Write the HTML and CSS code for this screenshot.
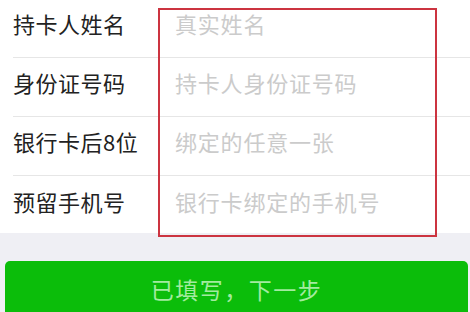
FILE: index.html
```html
<!DOCTYPE html>
<html>
<head>
<meta charset="utf-8">
<link rel="stylesheet" href="styles.css">
</head>
<body>
<div class="page">
  <div class="form">
    <div class="row"><span class="label">持卡人姓名</span><span class="ph">真实姓名</span></div>
    <div class="row"><span class="label">身份证号码</span><span class="ph">持卡人身份证号码</span></div>
    <div class="row"><span class="label">银行卡后8位</span><span class="ph">绑定的任意一张</span></div>
    <div class="row last"><span class="label">预留手机号</span><span class="ph">银行卡绑定的手机号</span></div>
    <div class="mark"></div>
  </div>
  <div class="btnwrap"><div class="btn">已填写，下一步</div></div>
</div>
</body>
</html>
```
FILE: styles.css
```css
html, body { margin: 0; padding: 0; }
body {
  width: 470px; height: 312px; overflow: hidden;
  background: #efeff4;
  font-family: "Noto Sans CJK SC", "Noto Sans", sans-serif;
}
.form {
  position: relative;
  background: #fff;
  padding-left: 13px;
  height: 234px;
  margin-top: -1px;
}
.row {
  display: flex;
  align-items: center;
  height: 58px;
  padding-bottom: 10px;
  box-sizing: border-box;
  height: 59px;
  border-bottom: 1px solid #e6e6e6;
}
.row.last { border-bottom: none; }
.label {
  width: 162px;
  font-size: 22px;
  color: #222;
  letter-spacing: 0.5px;
}
.ph {
  font-size: 22px;
  color: #cbcbcb;
  letter-spacing: 0.8px;
}
.mark {
  position: absolute;
  left: 158px; top: 9px;
  width: 275px; height: 225px;
  border: 2px solid #cc3440;
}
.btnwrap { padding: 28px 2px 0 5px; }
.btn {
  height: 60px;
  background: #0bbd0a;
  border-radius: 5px;
  color: #a3eba0;
  font-size: 23px;
  letter-spacing: 1.5px;
  display: flex;
  justify-content: center;
  padding-top: 11px;
  box-sizing: border-box;
}
```
